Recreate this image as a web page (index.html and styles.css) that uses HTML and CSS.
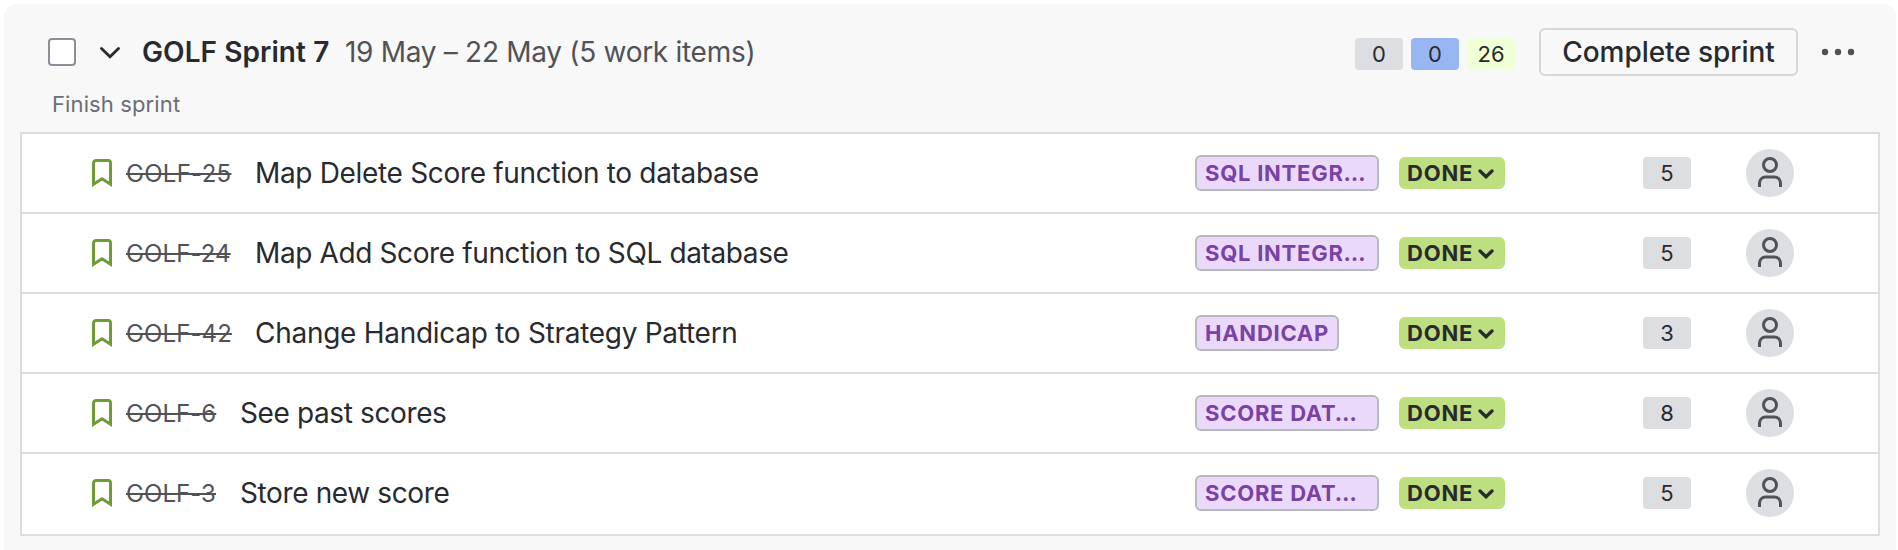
FILE: index.html
```html
<!DOCTYPE html>
<html lang="en">
<head>
<meta charset="utf-8">
<title>GOLF Sprint 7</title>
<link rel="stylesheet" href="styles.css">
</head>
<body>
<svg class="defs" aria-hidden="true">
  <symbol id="story" viewBox="0 0 20 28"><path d="M1.5 25.2V4A2.5 2.5 0 0 1 4 1.5H16A2.5 2.5 0 0 1 18.500 4V25.200L10 19.700Z" fill="none" stroke="#6f9b37" stroke-width="3"/></symbol>
  <symbol id="caret" viewBox="0 0 16 10"><path d="M2 2L8 7.800L14 2" fill="none" stroke="#292a2e" stroke-width="3.300" stroke-linecap="round"/></symbol>
  <symbol id="person" viewBox="0 0 24 30"><circle cx="12" cy="8" r="6.500" fill="none" stroke="#505258" stroke-width="3"/><path d="M1.500 30V26A6 6 0 0 1 7.500 20H16.500A6 6 0 0 1 22.500 26V30" fill="none" stroke="#505258" stroke-width="3"/></symbol>
</svg>
<main class="sprint">
  <header class="head">
    <span class="check"></span>
    <svg class="toggle" viewBox="0 0 20 12"><path d="M1.500 1.500L10 9.800L18.500 1.500" fill="none" stroke="#292a2e" stroke-width="2.800" stroke-linecap="round"/></svg>
    <h1 class="name">GOLF Sprint 7</h1>
    <span class="dates">19 May – 22 May (5 work items)</span>
    <div class="totals">
      <span class="total todo">0</span>
      <span class="total doing">0</span>
      <span class="total complete">26</span>
    </div>
    <button class="finish">Complete sprint</button>
    <svg class="more" viewBox="0 0 34 8"><g fill="#505258"><circle cx="4" cy="4" r="3.200"/><circle cx="17" cy="4" r="3.200"/><circle cx="30" cy="4" r="3.200"/></g></svg>
  </header>
  <p class="goal">Finish sprint</p>
  <section class="items">
    <article class="item">
      <svg class="type"><use href="#story"/></svg>
      <span class="key">GOLF-25</span>
      <span class="summary">Map Delete Score function to database</span>
      <span class="epic-cell"><span class="epic">SQL INTEGR…</span></span>
      <span class="status">DONE<svg class="caret"><use href="#caret"/></svg></span>
      <span class="points">5</span>
      <span class="avatar"><svg class="person"><use href="#person"/></svg></span>
    </article>
    <article class="item">
      <svg class="type"><use href="#story"/></svg>
      <span class="key snug">GOLF-24</span>
      <span class="summary tight">Map Add Score function to SQL database</span>
      <span class="epic-cell"><span class="epic">SQL INTEGR…</span></span>
      <span class="status">DONE<svg class="caret"><use href="#caret"/></svg></span>
      <span class="points">5</span>
      <span class="avatar"><svg class="person"><use href="#person"/></svg></span>
    </article>
    <article class="item">
      <svg class="type"><use href="#story"/></svg>
      <span class="key snug">GOLF-42</span>
      <span class="summary wide">Change Handicap to Strategy Pattern</span>
      <span class="epic-cell"><span class="epic short">HANDICAP</span></span>
      <span class="status">DONE<svg class="caret"><use href="#caret"/></svg></span>
      <span class="points">3</span>
      <span class="avatar"><svg class="person"><use href="#person"/></svg></span>
    </article>
    <article class="item">
      <svg class="type"><use href="#story"/></svg>
      <span class="key brief">GOLF-6</span>
      <span class="summary tight">See past scores</span>
      <span class="epic-cell"><span class="epic">SCORE DAT…</span></span>
      <span class="status">DONE<svg class="caret"><use href="#caret"/></svg></span>
      <span class="points">8</span>
      <span class="avatar"><svg class="person"><use href="#person"/></svg></span>
    </article>
    <article class="item">
      <svg class="type"><use href="#story"/></svg>
      <span class="key brief">GOLF-3</span>
      <span class="summary tight">Store new score</span>
      <span class="epic-cell"><span class="epic">SCORE DAT…</span></span>
      <span class="status">DONE<svg class="caret"><use href="#caret"/></svg></span>
      <span class="points">5</span>
      <span class="avatar"><svg class="person"><use href="#person"/></svg></span>
    </article>
  </section>
</main>
</body>
</html>
```
FILE: styles.css
```css
* { box-sizing: border-box; }
html, body { height: 100%; }
body {
  margin: 0;
  padding: 4px 2px 0 4px;
  overflow: hidden;
  background: #fff;
  color: #292a2e;
  font-family: Inter, "Liberation Sans", sans-serif;
}
.defs { display: none; }
.sprint {
  height: 546px;
  padding: 0 16px;
  background: #f8f8f8;
  border-radius: 12px 12px 0 0;
}
.head {
  display: flex;
  align-items: center;
  height: 84px;
  padding: 12px 26px 0 28px;
  white-space: nowrap;
}
.check {
  width: 28px;
  height: 28px;
  border: 2px solid #8c8f97;
  border-radius: 4px;
  background: #fff;
}
.toggle { width: 20px; height: 12px; margin: 2px 22px 0 24px; }
.name {
  width: 203px;
  margin: 0;
  font-size: 28px;
  font-weight: 600;
  letter-spacing: .07px;
  line-height: 36px;
}
.dates {
  font-size: 28px;
  line-height: 36px;
  letter-spacing: -.29px;
  color: #505258;
}
.totals { display: flex; gap: 8px; margin: 4px 24px 0 auto; }
.total, .points {
  display: flex;
  align-items: center;
  justify-content: center;
  width: 48px;
  height: 32px;
  border-radius: 4px;
  font-size: 22px;
  background: #dddee1;
}
.doing { background: #98b6f2; }
.complete { background: #efffd6; }
.finish {
  width: 259px;
  height: 48px;
  padding: 0;
  border: 2px solid #d6d7d8;
  border-radius: 6px;
  background: transparent;
  color: inherit;
  font: 500 28px/36px Inter, "Liberation Sans", sans-serif;
  letter-spacing: -.06px;
}
.more { width: 34px; height: 8px; margin: 0 -1px 0 23px; }
.goal {
  height: 44px;
  margin: 0;
  padding: 2px 0 0 32px;
  font-size: 22px;
  line-height: 28px;
  letter-spacing: .12px;
  color: #6b6e76;
}
.items {
  width: 1860px;
  border: 2px solid #dcddde;
  background: #fff;
}
.item {
  display: flex;
  align-items: center;
  height: 80px;
  padding: 0 84px 0 70px;
  border-bottom: 2px solid #dcddde;
  white-space: nowrap;
}
.item:last-child { border-bottom: 0; padding-bottom: 2px; }
.type { width: 20px; height: 28px; margin-right: 14px; }
.key {
  width: 105px;
  margin: 2px 24px 0 0;
  font-size: 24px;
  letter-spacing: .28px;
  line-height: 32px;
  color: #505258;
  text-decoration: line-through;
  text-decoration-thickness: 2px;
}
.snug { letter-spacing: .1px; }
.brief { width: 90px; letter-spacing: .06px; }
.summary { flex: 1; font-size: 28px; line-height: 36px; letter-spacing: -.33px; }
.wide { letter-spacing: -.28px; }
.tight { letter-spacing: -.38px; }
.epic-cell { display: flex; width: 204px; }
.epic {
  width: 184px;
  height: 36px;
  padding-left: 8px;
  border: 2px solid #b7b9be;
  border-radius: 6px;
  background: #ead9fa;
  color: #7a42a5;
  font-size: 22px;
  font-weight: 700;
  line-height: 32px;
  letter-spacing: .75px;
}
.short { width: 144px; }
.status {
  display: flex;
  align-items: center;
  justify-content: space-between;
  width: 106px;
  height: 32px;
  margin-right: 138px;
  padding: 0 11px 0 8px;
  border-radius: 6px;
  background: #bddf7f;
  font-size: 22px;
  font-weight: 700;
  letter-spacing: .8px;
}
.caret { width: 16px; height: 10px; margin-top: 1px; }
.avatar {
  display: flex;
  justify-content: center;
  width: 48px;
  height: 48px;
  margin-left: 55px;
  padding-top: 8px;
  border-radius: 50%;
  background: #dddee1;
}
.person { width: 24px; height: 30px; }
```
